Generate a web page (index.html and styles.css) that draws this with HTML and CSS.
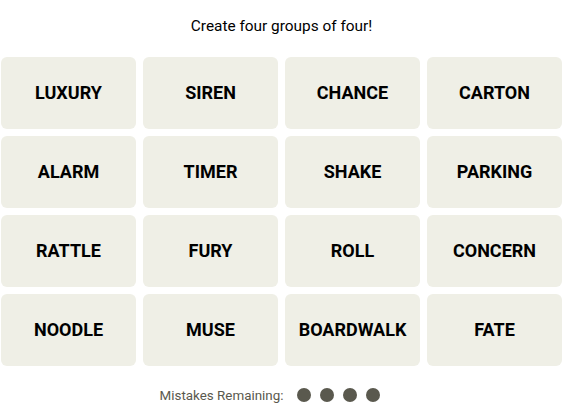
FILE: index.html
```html
<!DOCTYPE html>
<html>
<head>
<meta charset="utf-8">
<link rel="stylesheet" href="styles.css">
</head>
<body>
<div class="game">
  <p class="prompt">Create four groups of four!</p>
  <div class="board">
    <div class="tile">LUXURY</div>
    <div class="tile">SIREN</div>
    <div class="tile">CHANCE</div>
    <div class="tile">CARTON</div>
    <div class="tile">ALARM</div>
    <div class="tile">TIMER</div>
    <div class="tile">SHAKE</div>
    <div class="tile">PARKING</div>
    <div class="tile">RATTLE</div>
    <div class="tile">FURY</div>
    <div class="tile">ROLL</div>
    <div class="tile">CONCERN</div>
    <div class="tile">NOODLE</div>
    <div class="tile">MUSE</div>
    <div class="tile">BOARDWALK</div>
    <div class="tile">FATE</div>
  </div>
  <div class="mistakes">
    <span class="label">Mistakes Remaining:</span>
    <span class="dots"><i class="dot"></i><i class="dot"></i><i class="dot"></i><i class="dot"></i></span>
  </div>
</div>
</body>
</html>
```
FILE: styles.css
```css
html, body {
  margin: 0;
  padding: 0;
  background: #fff;
}
.game {
  width: 561px;
  margin-left: 1px;
  font-family: Roboto, "Liberation Sans", sans-serif;
}
.prompt {
  margin: 0;
  padding-top: 17px;
  height: 57px;
  box-sizing: border-box;
  text-align: center;
  font-size: 15.4px;
  color: #000;
  line-height: 18px;
}
.board {
  display: grid;
  grid-template-columns: repeat(4, 135px);
  grid-auto-rows: 72px;
  column-gap: 7px;
  row-gap: 7px;
}
.tile {
  background: #efefe6;
  border-radius: 6px;
  display: flex;
  align-items: center;
  justify-content: center;
  padding-bottom: 2px;
  box-sizing: border-box;
  font-weight: 700;
  font-size: 18px;
  color: #000;
}
.mistakes {
  display: flex;
  justify-content: center;
  align-items: center;
  gap: 13px;
  height: 30px;
  margin-top: 14px;
  margin-right: 23px;
}
.label {
  font-size: 13.4px;
  color: #5a594e;
}
.dots {
  display: flex;
  gap: 9.3px;
}
.dot {
  width: 14px;
  height: 14px;
  border-radius: 50%;
  background: #5a594e;
}
```
